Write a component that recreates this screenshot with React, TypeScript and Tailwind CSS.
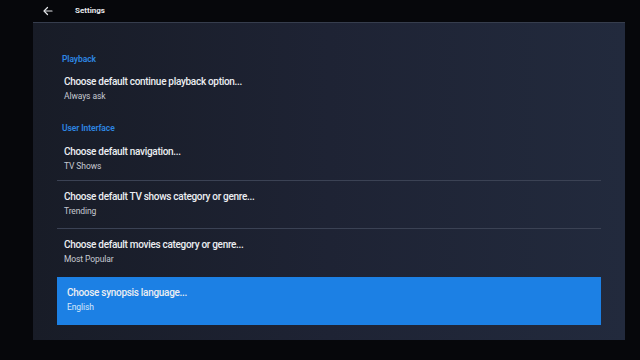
import React from 'react'

type Item = { title: string; value: string; active?: boolean; divider?: boolean; h: string }

const playback: Item[] = [
  { title: 'Choose default continue playback option...', value: 'Always ask', h: 'h-[49px]' },
]

const ui: Item[] = [
  { title: 'Choose default navigation...', value: 'TV Shows', divider: true, h: 'h-[45px]' },
  { title: 'Choose default TV shows category or genre...', value: 'Trending', divider: true, h: 'h-[48px]' },
  { title: 'Choose default movies category or genre...', value: 'Most Popular', h: 'h-[48px]' },
  { title: 'Choose synopsis language...', value: 'English', active: true, h: 'h-[48px]' },
]

function Row({ item }: { item: Item }) {
  return (
    <div
      className={`${item.h} flex flex-col pt-[9px] pl-[7px] ${
        item.active ? 'bg-[#1c80e4] pl-[10px]' : ''
      } ${item.divider ? 'border-b border-[#3b4254]' : ''}`}
    >
      <div className="text-[10px] leading-[14px] font-medium tracking-[-0.3px] text-[#eceef2]">{item.title}</div>
      <div className={`mt-[1px] text-[8.5px] leading-[12px] tracking-[-0.1px] ${item.active ? 'text-[#d6e8fb]' : 'text-[#c6cad2]'}`}>
        {item.value}
      </div>
    </div>
  )
}

function Header({ label, pad }: { label: string; pad: string }) {
  return (
    <div className={`${pad} pl-[5px] text-[8.5px] leading-[12px] font-semibold tracking-[-0.1px] text-[#2d86e2]`}>{label}</div>
  )
}

export default function App() {
  return (
    <div className="w-[640px] h-[360px] bg-[#06070b] flex flex-col overflow-hidden" style={{ fontFamily: 'Roboto, "Liberation Sans", sans-serif' }}>
      <div className="h-[22px] flex items-center pl-[42px] gap-[21px] text-[#e4e6ea]">
        <svg width="12" height="12" viewBox="0 0 24 24" fill="none" stroke="currentColor" strokeWidth="2.4" strokeLinecap="round" strokeLinejoin="round">
          <path d="M20 12H5" />
          <path d="M11 5l-7 7 7 7" />
        </svg>
        <span className="text-[8px] font-bold">Settings</span>
      </div>
      <div className="ml-[33px] w-[592px] h-[318px] bg-gradient-to-r from-[#181c27] via-[#1e2334] to-[#222a3d] border-t border-[#363d4d] pt-[28px] pl-[24px] pr-[24px]">
        <Header label="Playback" pad="pt-[2px]" />
        <div className="mt-[1px]">
          {playback.map((it) => (
            <Row key={it.title} item={it} />
          ))}
        </div>
        <Header label="User Interface" pad="pt-[7px] pb-[2px]" />
        <div>
          {ui.map((it) => (
            <Row key={it.title} item={it} />
          ))}
        </div>
      </div>
    </div>
  )
}
